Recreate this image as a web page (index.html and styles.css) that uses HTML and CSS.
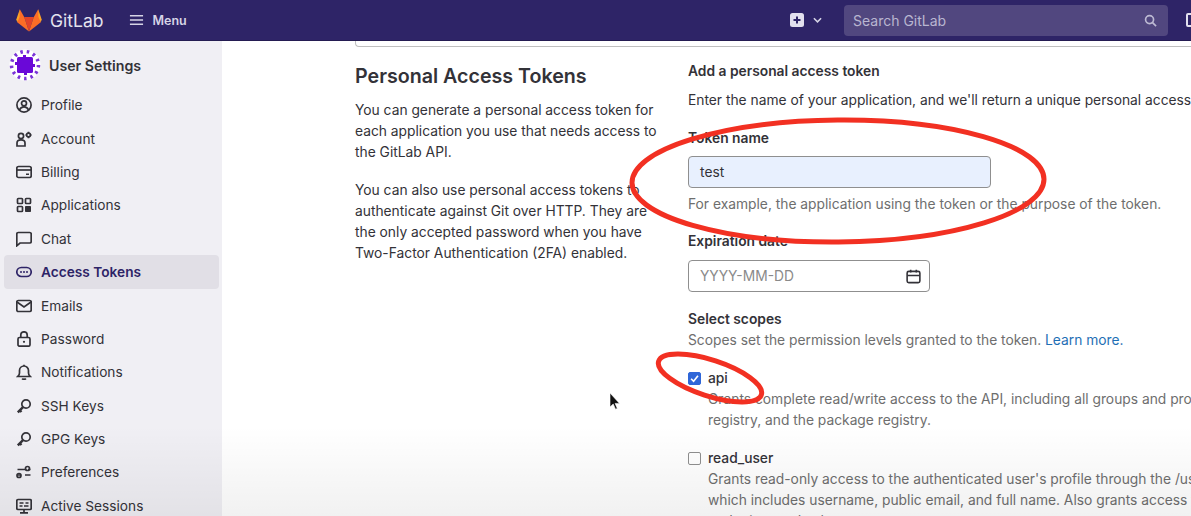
FILE: index.html
```html
<!DOCTYPE html>
<html lang="en">
<head>
    <meta charset="UTF-8" />
    <title>Personal Access Tokens</title>
    <link rel="stylesheet" href="styles.css">
</head>
<body>
    <header class="top-nav">
        <svg class="logo" viewBox="0 0 26 24" width="26" height="24">
            <path fill="#e24329" d="M13 23.5 8.2 9H17.8z"/>
            <path fill="#fc6d26" d="M13 23.5 1.2 14.2 3.8 1.2 8.2 9z"/>
            <path fill="#fca326" d="M1.2 14.2.3 11.6 3.8 1.2 3.6 9z"/>
            <path fill="#fc6d26" d="M13 23.5 24.8 14.2 22.2 1.2 17.8 9z"/>
            <path fill="#fca326" d="M24.8 14.2 25.7 11.6 22.2 1.2 22.4 9z"/>
        </svg>
        <span class="brand">GitLab</span>
        <svg class="menu-icon" viewBox="0 0 16 12" width="15" height="12">
            <path d="M1 1.5h14M1 6h14M1 10.500h14" stroke="#d6d4e6" stroke-width="1.600" fill="none"/>
        </svg>
        <span class="menu-label">Menu</span>
        <div class="nav-right">
            <svg class="plus-icon" viewBox="0 0 14 14" width="14" height="14">
                <rect width="14" height="14" rx="2.500" fill="#e2e0ee"/>
                <path d="M7 3.500v7M3.500 7h7" stroke="#2e2467" stroke-width="2"/>
            </svg>
            <svg class="caret-icon" viewBox="0 0 10 6" width="9" height="6">
                <path d="M1 1l4 4 4-4" stroke="#d6d4e6" stroke-width="1.700" fill="none"/>
            </svg>
            <div class="search-box">
                <span>Search GitLab</span>
                <svg viewBox="0 0 14 14" width="13" height="13">
                    <circle cx="6" cy="6" r="4.300" stroke="#bdbad3" stroke-width="1.800" fill="none"/>
                    <path d="M9.200 9.200 13 13" stroke="#bdbad3" stroke-width="1.800"/>
                </svg>
            </div>
            <div class="nav-stub"></div>
        </div>
    </header>

    <div class="page">
        <aside class="sidebar">
            <div class="side-title">
                <svg class="avatar" viewBox="0 0 32 32" width="32" height="32">
                    <circle cx="16" cy="16" r="15.500" fill="#fff"/>
                    <circle cx="16" cy="16" r="13.500" fill="none" stroke="#7a35d6" stroke-width="3.500" stroke-dasharray="2.500 4"/>
                    <rect x="8" y="8" width="16" height="16" rx="1.500" fill="#6a08d8"/>
                    <path fill="#6a08d8" d="M6 13h2v3H6zM24 15h2v3h-2zM14 6h3v2h-3zM15 24h3v2h-3z"/>
                </svg>
                <span>User Settings</span>
            </div>
            <nav class="side-list">
                <a class="side-item">
                    <svg viewBox="0 0 16 16"><circle cx="8" cy="8" r="7.100" class="line"/><circle cx="8" cy="6.300" r="2.500" class="line"/><path class="line" d="M3.500 13c.8-2.200 2.500-3.200 4.500-3.200s3.700 1 4.500 3.200"/></svg>
                    Profile
                </a>
                <a class="side-item">
                    <svg viewBox="0 0 16 16"><circle cx="5" cy="5" r="2.600" class="line"/><path class="line" d="M1 15v-3c0-2 1.500-3.200 4-3.200S9 10 9 12v3z"/><circle cx="12.500" cy="4" r="1.900" class="line"/><path class="line" d="M12.500 .8v1.200M12.500 6v1.200M9.500 4h1M14.500 4h1"/></svg>
                    Account
                </a>
                <a class="side-item">
                    <svg viewBox="0 0 16 16"><rect x=".8" y="2.500" width="14.400" height="11" rx="1.800" class="line"/><path class="line" d="M1 6h14"/><path d="M10 9.500h3v1.500h-3z" fill="#333238"/></svg>
                    Billing
                </a>
                <a class="side-item">
                    <svg viewBox="0 0 16 16"><rect x="1.500" y="1.500" width="5" height="5" rx=".8" class="line"/><rect x="9.500" y="1.500" width="5" height="5" rx=".8" class="line"/><rect x="1.500" y="9.500" width="5" height="5" rx=".8" class="line"/><rect x="9" y="9" width="6" height="6" rx=".8" fill="#333238"/></svg>
                    Applications
                </a>
                <a class="side-item">
                    <svg viewBox="0 0 16 16"><path class="line" d="M.8 14.800V3a1.500 1.500 0 0 1 1.500-1.500h11.400A1.500 1.500 0 0 1 15.200 3v7.500a1.500 1.500 0 0 1-1.500 1.500H4z"/></svg>
                    Chat
                </a>
                <a class="side-item is-active">
                    <svg viewBox="0 0 16 16"><rect x=".8" y="3.500" width="14.400" height="9" rx="4.500" class="line-active"/><circle cx="5" cy="8" r="1" fill="#2e2467"/><circle cx="8" cy="8" r="1" fill="#2e2467"/><circle cx="11" cy="8" r="1" fill="#2e2467"/></svg>
                    Access Tokens
                </a>
                <a class="side-item">
                    <svg viewBox="0 0 16 16"><rect x=".8" y="2.500" width="14.400" height="11" rx="1.500" class="line"/><path class="line" d="M1 4l7 5 7-5"/></svg>
                    Emails
                </a>
                <a class="side-item">
                    <svg viewBox="0 0 16 16"><rect x="2" y="6.500" width="12" height="8.700" rx="1.500" class="line"/><path class="line" d="M4.800 6.500V4a3.200 3.200 0 0 1 6.400 0v2.500"/><circle cx="8" cy="10.800" r="1.100" fill="#333238"/></svg>
                    Password
                </a>
                <a class="side-item">
                    <svg viewBox="0 0 16 16"><path class="line" d="M1.800 12.500c1.200-1 1.700-2 1.700-3.500V6.500a4.500 4.500 0 0 1 9 0V9c0 1.500.5 2.500 1.700 3.500z"/><path class="line" d="M6.200 14.500c.5 1 3.100 1 3.600 0M8 .8V2"/></svg>
                    Notifications
                </a>
                <a class="side-item">
                    <svg viewBox="0 0 16 16"><circle cx="10" cy="6" r="4.200" class="line"/><path class="thick" d="M7 9.200 1.800 14.400M3.800 12.400 5.500 14"/></svg>
                    SSH Keys
                </a>
                <a class="side-item">
                    <svg viewBox="0 0 16 16"><circle cx="10" cy="6" r="4.200" class="line"/><path class="thick" d="M7 9.200 1.800 14.400M3.800 12.400 5.500 14"/></svg>
                    GPG Keys
                </a>
                <a class="side-item">
                    <svg viewBox="0 0 16 16"><path class="line" d="M1.500 5.500h8M1.500 11h3.500M9 11h5.500M12 5.500h2.500"/><circle cx="11.500" cy="4.500" r="2" class="line"/><circle cx="3" cy="11.500" r="2" class="line"/></svg>
                    Preferences
                </a>
                <a class="side-item">
                    <svg viewBox="0 0 16 16"><rect x=".8" y="1.500" width="14.400" height="10" rx="1.200" class="line"/><path class="line" d="M3.500 5h4M9.500 5h3M3.500 8h3M8 8h4.500M8 11.500v3M4 14.800h8"/></svg>
                    Active Sessions
                </a>
            </nav>
        </aside>

        <main class="content">
            <div class="prev-box"></div>
            <div class="token-row">
                <section class="intro">
                    <h2>Personal Access Tokens</h2>
                    <p>You can generate a personal access token for each application you use that needs access to the GitLab API.</p>
                    <p>You can also use personal access tokens to authenticate against Git over HTTP. They are the only accepted password when you have Two-Factor Authentication (2FA) enabled.</p>
                </section>
                <section class="token-form">
                    <h5>Add a personal access token</h5>
                    <p class="lead">Enter the name of your application, and we'll return a unique personal access token.</p>
                    <label class="field-label">Token name</label>
                    <div class="input name-input">test</div>
                    <p class="help">For example, the application using the token or the purpose of the token.</p>
                    <label class="field-label date-label">Expiration date</label>
                    <div class="input date-input">
                        <span>YYYY-MM-DD</span>
                        <svg viewBox="0 0 16 16" width="15" height="15"><rect x="1.200" y="2.500" width="13.600" height="12" rx="1.800" class="line"/><path class="line" d="M1.500 7h13M5 .8v3M11 .8v3"/></svg>
                    </div>
                    <label class="field-label scopes-label">Select scopes</label>
                    <p class="scopes-text">Scopes set the permission levels granted to the token. <a>Learn more.</a></p>
                    <div class="scope first-scope">
                        <div class="scope-head">
                            <span class="check is-checked"><svg viewBox="0 0 12 12" width="11" height="11"><path d="M2.300 6.300 5 9l4.800-6" stroke="#fff" stroke-width="1.800" fill="none"/></svg></span>
                            <span class="scope-name">api</span>
                        </div>
                        <p class="scope-desc">Grants complete read/write access to the API, including all groups and projects, the container<br>registry, and the package registry.</p>
                    </div>
                    <div class="scope">
                        <div class="scope-head">
                            <span class="check"></span>
                            <span class="scope-name">read_user</span>
                        </div>
                        <p class="scope-desc">Grants read-only access to the authenticated user's profile through the /user API endpoint,<br>which includes username, public email, and full name. Also grants access to read-only API<br>endpoints under /users.</p>
                    </div>
                </section>
            </div>
        </main>
    </div>

    <!-- things drawn on top of the video frame -->
    <div class="bottom-shade"></div>
    <svg class="marks" viewBox="0 0 1191 516" width="1191" height="516">
        <ellipse cx="838" cy="181" rx="206" ry="61" fill="none" stroke="#f23022" stroke-width="5" transform="rotate(-.5 838 181)"/>
        <ellipse cx="710" cy="378" rx="54" ry="18" fill="none" stroke="#f23022" stroke-width="5" transform="rotate(18 710 378)"/>
        <path d="M610 393v14l3.200-3 2.300 5.200 1.800-.8-2.200-5h4.400z" fill="#111" stroke="#fff" stroke-width=".6"/>
    </svg>
</body>
</html>
```

FILE: styles.css
```css
html {
    height: 100%;
}
body {
    margin: 0;
    padding: 0;
    width: 1191px;
    height: 516px;
    position: relative;
    overflow: hidden;
    background: #fff;
    color: #333238;
    font-family: Inter, "Noto Sans", sans-serif;
    font-size: 13.800px;
}
p, h2, h5 {
    margin: 0;
}
.top-nav {
    height: 41px;
    box-sizing: border-box;
    display: flex;
    align-items: center;
    padding-left: 16px;
    background: #2e2467;
    border-bottom: 1px solid #241c52;
}
.brand {
    margin-left: 8px;
    color: #e4e3ee;
    font-size: 17.500px;
}
.menu-icon {
    margin-left: 26px;
}
.menu-label {
    margin-left: 8px;
    color: #d6d4e6;
    font-size: 12.500px;
    font-weight: 600;
}
.nav-right {
    margin-left: auto;
    display: flex;
    align-items: center;
}
.caret-icon {
    margin-left: 9px;
}
.search-box {
    width: 324px;
    height: 31px;
    box-sizing: border-box;
    margin-left: 22px;
    padding: 0 11px 0 9px;
    display: flex;
    align-items: center;
    justify-content: space-between;
    background: #51477f;
    border-radius: 4px;
    color: #b9b6d0;
    font-size: 14px;
}
.nav-stub {
    width: 20px;
    height: 14px;
    margin: 0 -15px 0 18px;
    border: 2px solid #e2e0ee;
    border-radius: 2px;
    box-sizing: border-box;
}
.page {
    display: flex;
    height: 475px;
}
.sidebar {
    width: 222px;
    flex-shrink: 0;
    background: #f0eff4;
}
.side-title {
    display: flex;
    align-items: center;
    gap: 8px;
    padding: 9px 0 0 9px;
    height: 30px;
    font-weight: 600;
    font-size: 14.200px;
}
.side-list {
    display: flex;
    flex-direction: column;
    padding: 8.500px 3px 0 4px;
    font-size: 13.700px;
}
.side-item {
    height: 33.400px;
    flex-shrink: 0;
    display: flex;
    align-items: center;
    gap: 9px;
    padding-left: 12px;
    box-sizing: border-box;
    border-radius: 4px;
}
.side-item svg {
    width: 16px;
    height: 16px;
    flex-shrink: 0;
}
.side-item.is-active {
    background: #e1dfe6;
    color: #2e2467;
    font-weight: 600;
}
.line, .line-active, .thick {
    fill: none;
    stroke: #333238;
    stroke-width: 1.700;
}
.line-active {
    stroke: #2e2467;
}
.thick {
    stroke-width: 2.400;
}
.content {
    flex: 1;
    min-width: 0;
    padding-left: 133px;
    overflow: hidden;
}
.prev-box {
    height: 5px;
    border: 1px solid #bfbfbf;
    border-top: none;
    border-right: none;
    border-radius: 0 0 0 4px;
}
.token-row {
    display: flex;
    padding-top: 13px;
}
.intro {
    width: 333px;
    flex-shrink: 0;
    line-height: 21px;
}
.intro h2 {
    font-size: 19.650px;
    font-weight: 600;
    line-height: 32px;
    margin: 0 0 8px;
}
.intro p {
    width: 308px;
    margin-bottom: 17px;
}
.token-form {
    white-space: nowrap;
    line-height: 21px;
    padding-top: 1px;
}
.token-form h5 {
    font-size: 13.800px;
    font-weight: 600;
}
.lead {
    margin-top: 8px;
}
.field-label {
    display: block;
    margin-top: 17px;
    font-weight: 600;
}
.input {
    box-sizing: border-box;
    height: 32px;
    margin-top: 7px;
    padding: 0 11px;
    display: flex;
    align-items: center;
    border: 1px solid #8f8f8f;
    border-radius: 4px;
}
.name-input {
    width: 303px;
    background: #e8f0fe;
}
.help {
    margin-top: 6px;
    color: #6e6e6e;
}
.date-label {
    margin-top: 16px;
}
.date-input {
    width: 242px;
    margin-top: 8px;
    justify-content: space-between;
    padding-right: 8px;
    color: #8a8a8a;
}
.scopes-label {
    margin-top: 17px;
}
.scopes-text {
    color: #6e6e6e;
}
.scopes-text a {
    color: #1f6fb5;
}
.first-scope {
    margin-top: 17px;
}
.scope {
    margin-bottom: 17px;
}
.scope-head {
    display: flex;
    align-items: center;
    gap: 7px;
    font-weight: 500;
}
.check {
    width: 13px;
    height: 13px;
    box-sizing: border-box;
    display: flex;
    align-items: center;
    justify-content: center;
    border: 1px solid #8f8f8f;
    border-radius: 2px;
    background: #fff;
}
.check.is-checked {
    border-color: #2f66d8;
    background: #2f66d8;
}
.scope-desc {
    margin-left: 20px;
    color: #6e6e6e;
}
.bottom-shade {
    position: absolute;
    left: 0;
    right: 0;
    bottom: 0;
    height: 90px;
    background: linear-gradient(rgba(0, 0, 0, 0), rgba(0, 0, 0, 0.055));
    pointer-events: none;
}
.marks {
    position: absolute;
    left: 0;
    top: 0;
    pointer-events: none;
}
```
